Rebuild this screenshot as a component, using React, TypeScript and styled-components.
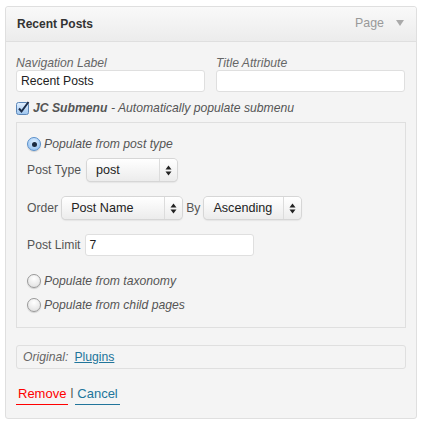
import styled, { createGlobalStyle } from 'styled-components';

const GlobalStyle = createGlobalStyle`
  body {
    margin: 0;
    background: #fff;
    font-family: "Liberation Sans", Arial, sans-serif;
    font-size: 12.2px;
    color: #333;
  }
`;

const Card = styled.div`
  margin: 6px 0 0 5px;
  width: 410px;
  border: 1px solid #dfdfdf;
  border-radius: 3px;
  background: #f4f4f4;
  box-shadow: 0 1px 0 #fff inset;
`;

const Header = styled.div`
  height: 34px;
  display: flex;
  align-items: center;
  justify-content: space-between;
  padding: 0 12px 0 11px;
  background: linear-gradient(to bottom, #f9f9f9, #ececec);
  border-bottom: 1px solid #dfdfdf;
  border-radius: 3px 3px 0 0;
`;

const HeaderTitle = styled.span`
  font-weight: bold;
  font-size: 12px;
  color: #333;
  margin-top: -1px;
`;

const HeaderType = styled.span`
  display: flex;
  align-items: center;
  gap: 12px;
  color: #999;
  font-size: 12.4px;
  margin-top: -2px;
`;

const Body = styled.div`
  padding: 13px 10px 0 10px;
`;

const Columns = styled.div`
  display: grid;
  grid-template-columns: 189px 189px;
  gap: 11px;
`;

const Field = styled.label`
  display: flex;
  flex-direction: column;
`;

const FieldLabel = styled.span`
  font-style: italic;
  color: #666;
  line-height: 16px;
  height: 15px;
`;

const TextInput = styled.div<{ w?: number }>`
  box-sizing: border-box;
  height: 22px;
  width: ${p => (p.w ? `${p.w}px` : '100%')};
  border: 1px solid #dfdfdf;
  border-radius: 3px;
  background: #fff;
  padding: 0 4px;
  line-height: 20px;
  color: #222;
`;

const CheckRow = styled.div`
  display: flex;
  align-items: center;
  gap: 3px;
  margin-top: 9px;
  height: 14px;
  color: #555;
  font-style: italic;
  b {
    font-weight: bold;
  }
`;

const Box = styled.div`
  margin-top: 7px;
  border: 1px solid #dfdfdf;
  background: #f4f4f4;
  padding: 13px 10px 14px;
  display: flex;
  flex-direction: column;
`;

const RadioRow = styled.div<{ mt?: number }>`
  display: flex;
  align-items: center;
  gap: 3px;
  height: 16px;
  margin-top: ${p => p.mt ?? 0}px;
  color: #555;
  font-style: italic;
`;

const RadioDot = styled.span<{ checked?: boolean }>`
  box-sizing: border-box;
  width: 14px;
  height: 14px;
  border-radius: 50%;
  border: 1px solid #999;
  background: radial-gradient(circle at 50% 30%, #fff, #ddd);
  display: flex;
  align-items: center;
  justify-content: center;
  box-shadow: 0 1px 1px rgba(0, 0, 0, 0.15);
  ${p =>
    p.checked &&
    `
    border-color: #5a8fc9;
    background: radial-gradient(circle at 50% 30%, #d8ecff, #8bbcf0);
    &::after {
      content: '';
      width: 5px;
      height: 5px;
      border-radius: 50%;
      background: #1a2a40;
    }
  `}
`;

const FormRow = styled.div<{ mt: number; gap: number }>`
  display: flex;
  align-items: center;
  gap: ${p => p.gap}px;
  margin-top: ${p => p.mt}px;
  color: #555;
`;

const SelectBox = styled.div<{ w: number }>`
  box-sizing: border-box;
  width: ${p => p.w}px;
  height: 22px;
  display: flex;
  align-items: center;
  border-radius: 4px;
  background: linear-gradient(to bottom, #fff, #ececec);
  box-shadow: 0 0 0 1px #d6d6d6, 0 1px 2px rgba(0, 0, 0, 0.2);
  color: #222;
  font-size: 12.6px;
`;

const SelectText = styled.span`
  flex: 1;
  padding-left: 9px;
`;

const SelectArrow = styled.span`
  width: 17px;
  height: 100%;
  border-left: 1px solid #dcdcdc;
  display: flex;
  align-items: center;
  justify-content: center;
`;

const Original = styled.div`
  margin-top: 17px;
  height: 24px;
  box-sizing: border-box;
  border: 1px solid #dfdfdf;
  border-radius: 3px;
  display: flex;
  align-items: center;
  padding-left: 6px;
  gap: 6px;
  font-style: italic;
  color: #666;
`;

const Link = styled.a`
  font-style: normal;
  color: #21759b;
  text-decoration: underline;
`;

const Actions = styled.div`
  display: flex;
  align-items: flex-start;
  margin-top: 17px;
  padding-bottom: 13px;
  gap: 2px;
  font-size: 13px;
`;

const ActionLink = styled.a<{ danger?: boolean }>`
  color: ${p => (p.danger ? '#f00' : '#21759b')};
  border-bottom: 1px solid ${p => (p.danger ? '#f00' : '#21759b')};
  line-height: 16px;
  padding: 0 2px 2px;
`;

const Sep = styled.span`
  color: #333;
  font-size: 11px;
  line-height: 13px;
`;

const Arrows = () => (
  <svg width="7" height="11" viewBox="0 0 7 11">
    <path d="M3.5 0.5 L6.5 4.5 H0.5 Z M3.5 10.5 L6.5 6.5 H0.5 Z" fill="#222" />
  </svg>
);

const Select = ({ w, value }: { w: number; value: string }) => (
  <SelectBox w={w}>
    <SelectText>{value}</SelectText>
    <SelectArrow>
      <Arrows />
    </SelectArrow>
  </SelectBox>
);

const Checkbox = () => (
  <svg width="14" height="14" viewBox="0 0 14 14">
    <defs>
      <linearGradient id="cb" x1="0" y1="0" x2="0" y2="1">
        <stop offset="0" stopColor="#e4f1ff" />
        <stop offset="1" stopColor="#9cc4ee" />
      </linearGradient>
    </defs>
    <rect x="0.5" y="1.5" width="12" height="12" rx="2" fill="url(#cb)" stroke="#5b86b8" />
    <path d="M3 7.5 L5.5 10.5 L12.5 1" fill="none" stroke="#1b2c48" strokeWidth="2" />
  </svg>
);

export default function App() {
  return (
    <>
      <GlobalStyle />
      <Card>
        <Header>
          <HeaderTitle>Recent Posts</HeaderTitle>
          <HeaderType>
            Page
            <svg width="8" height="6" viewBox="0 0 8 6">
              <path d="M0 0 H8 L4 6 Z" fill="#aaa" />
            </svg>
          </HeaderType>
        </Header>
        <Body>
          <Columns>
            <Field>
              <FieldLabel>Navigation Label</FieldLabel>
              <TextInput>Recent Posts</TextInput>
            </Field>
            <Field>
              <FieldLabel>Title Attribute</FieldLabel>
              <TextInput />
            </Field>
          </Columns>
          <CheckRow>
            <Checkbox />
            <span>
              <b>JC Submenu</b> - Automatically populate submenu
            </span>
          </CheckRow>
          <Box>
            <RadioRow>
              <RadioDot checked />
              Populate from post type
            </RadioRow>
            <FormRow mt={7} gap={6}>
              Post Type
              <Select w={90} value="post" />
            </FormRow>
            <FormRow mt={16} gap={4}>
              Order
              <Select w={120} value="Post Name" />
              By
              <Select w={97} value="Ascending" />
            </FormRow>
            <FormRow mt={15} gap={4}>
              Post Limit
              <TextInput w={169}>7</TextInput>
            </FormRow>
            <RadioRow mt={17}>
              <RadioDot />
              Populate from taxonomy
            </RadioRow>
            <RadioRow mt={8}>
              <RadioDot />
              Populate from child pages
            </RadioRow>
          </Box>
          <Original>
            Original:
            <Link>Plugins</Link>
          </Original>
          <Actions>
            <ActionLink danger>Remove</ActionLink>
            <Sep>|</Sep>
            <ActionLink>Cancel</ActionLink>
          </Actions>
        </Body>
      </Card>
    </>
  );
}
